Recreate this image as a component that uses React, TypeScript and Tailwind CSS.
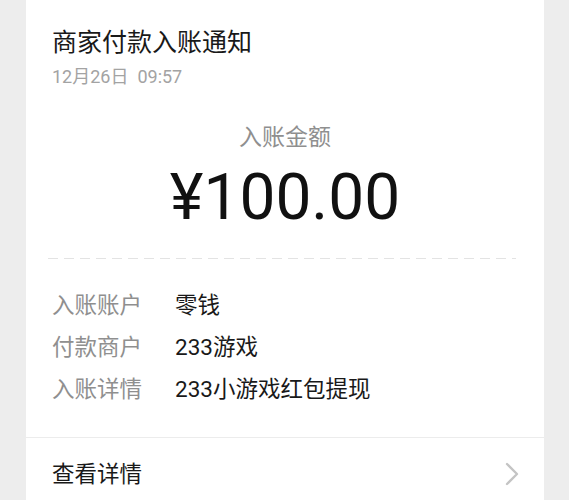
import React from 'react';
import { ChevronRight } from 'lucide-react';

const rows = [
  { label: '入账账户', value: '零钱' },
  { label: '付款商户', value: '233游戏' },
  { label: '入账详情', value: '233小游戏红包提现' },
];

export default function App() {
  return (
    <div
      className="w-[569px] h-[500px] overflow-hidden bg-[#ededed]"
      style={{ fontFamily: 'Roboto, "Noto Sans CJK SC", sans-serif' }}
    >
      <div className="ml-[26px] w-[518px] h-full bg-white flex flex-col">
        {/* header */}
        <div className="shrink-0 px-[26px] pt-[27px]">
          <div className="text-[25px] leading-[32px] text-[#191919]">商家付款入账通知</div>
          <div className="mt-[5px] text-[18px] leading-[26px] text-[#a3a3a3]">12月26日&nbsp;&nbsp;09:57</div>
        </div>

        {/* amount */}
        <div className="shrink-0 flex flex-col items-center mt-[32px]">
          <div className="text-[23px] leading-[32px] text-[#8f8f8f]">入账金额</div>
          <div className="mt-[6px] text-[64px] leading-[76px] text-[#111]">¥100.00</div>
        </div>

        {/* dashed divider */}
        <div className="shrink-0 ml-[22px] mr-[28px] mt-[22px] h-px bg-[repeating-linear-gradient(90deg,#e3e3e3_0px,#e3e3e3_10px,transparent_10px,transparent_16px)]" />

        {/* details */}
        <div className="shrink-0 px-[26px] pt-[30px] flex flex-col gap-[10px]">
          {rows.map(r => (
            <div key={r.label} className="flex text-[22.5px] leading-[32px]">
              <span className="w-[123px] text-[#8f8f8f]">{r.label}</span>
              <span className="text-[#191919]">{r.value}</span>
            </div>
          ))}
        </div>

        {/* footer link */}
        <div className="shrink-0 mt-[32px] border-t border-[#ececec] px-[26px] h-[72px] flex items-center justify-between">
          <span className="text-[22.5px] leading-[32px] text-[#191919]">查看详情</span>
          <ChevronRight size={40} strokeWidth={1.4} className="text-[#c4c4c4] -mr-[14px]" />
        </div>
      </div>
    </div>
  );
}
